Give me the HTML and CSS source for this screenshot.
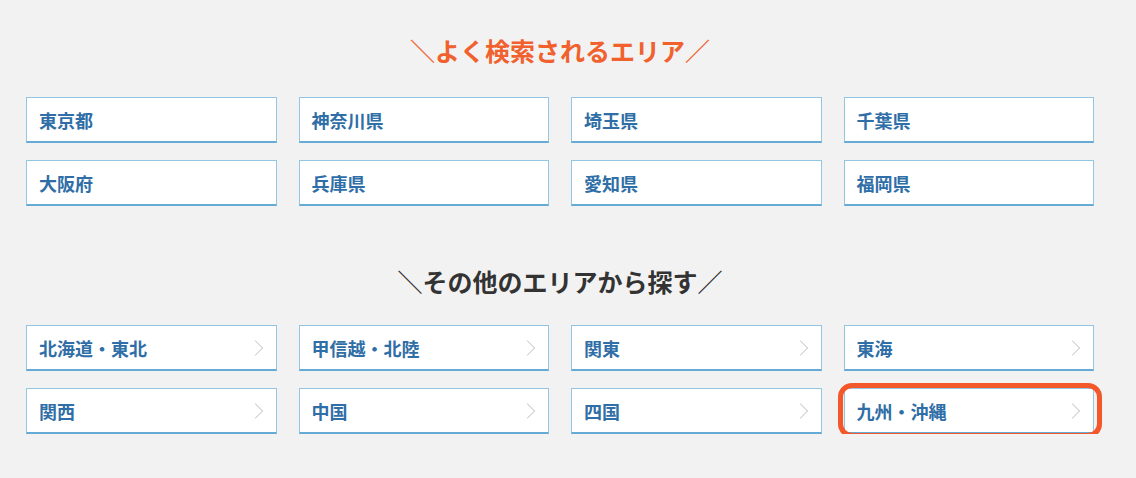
FILE: index.html
```html
<!DOCTYPE html>
<html lang="ja">
<head>
<meta charset="utf-8">
<link rel="stylesheet" href="styles.css">
</head>
<body>
<div class="page">
  <h2 class="title title-orange">＼よく検索されるエリア／</h2>
  <div class="grid">
    <a class="item">東京都</a>
    <a class="item">神奈川県</a>
    <a class="item">埼玉県</a>
    <a class="item">千葉県</a>
    <a class="item">大阪府</a>
    <a class="item">兵庫県</a>
    <a class="item">愛知県</a>
    <a class="item">福岡県</a>
  </div>
  <h2 class="title title-dark">＼その他のエリアから探す／</h2>
  <div class="grid">
    <a class="item arrow">北海道・東北</a>
    <a class="item arrow">甲信越・北陸</a>
    <a class="item arrow">関東</a>
    <a class="item arrow">東海</a>
    <a class="item arrow">関西</a>
    <a class="item arrow">中国</a>
    <a class="item arrow">四国</a>
    <a class="item arrow highlight">九州・沖縄</a>
  </div>
</div>
</body>
</html>
```
FILE: styles.css
```css
html, body {
  margin: 0;
  padding: 0;
  background: #f2f2f2;
}
body {
  font-family: "Noto Sans CJK JP", "Noto Sans", sans-serif;
}
.page {
  width: 1068px;
  padding: 34px 0 0 26px;
}
.title {
  margin: 0;
  text-align: center;
  font-size: 25px;
  line-height: 32px;
  font-weight: 700;
}
.title-orange {
  color: #f0612d;
  margin-bottom: 31px;
}
.title-dark {
  color: #333333;
  margin-top: 59px;
  margin-bottom: 28px;
}
.grid {
  display: grid;
  grid-template-columns: repeat(4, 1fr);
  column-gap: 22px;
  row-gap: 17px;
}
.item {
  position: relative;
  display: flex;
  align-items: center;
  box-sizing: border-box;
  height: 46px;
  padding-left: 12px;
  background: #ffffff;
  border: 1px solid #93c6e2;
  border-bottom: 2px solid #66aad6;
  color: #2f6ea6;
  font-size: 18px;
  font-weight: 700;
}
.arrow::after {
  content: "";
  position: absolute;
  right: 15px;
  top: 50%;
  width: 10px;
  height: 10px;
  border-top: 1px solid #cfcfcf;
  border-right: 1px solid #cfcfcf;
  transform: translateY(-50%) rotate(45deg);
}
.highlight::before {
  content: "";
  position: absolute;
  left: -7px;
  right: -9px;
  top: -6px;
  bottom: -6px;
  border: 5px solid #f4572a;
  border-radius: 14px;
}
```
